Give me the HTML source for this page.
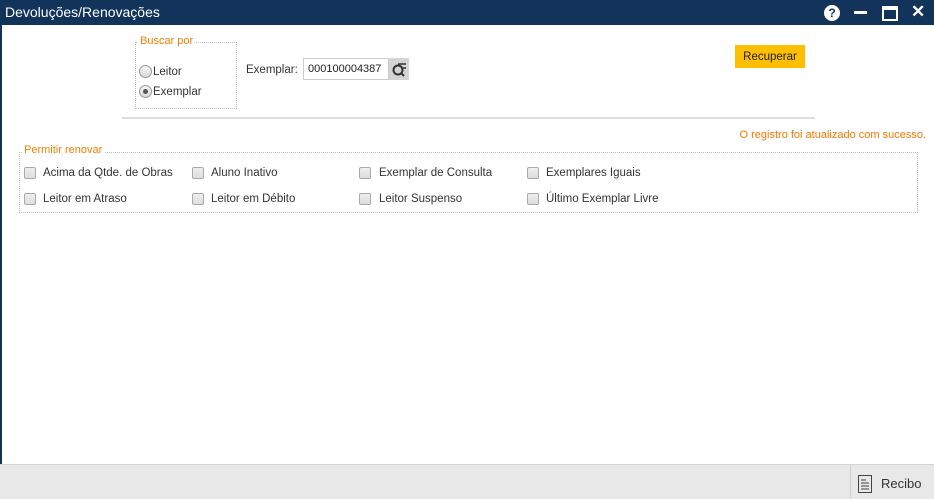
<!DOCTYPE html>
<html><head><meta charset="utf-8"><style>
*{margin:0;padding:0;box-sizing:border-box}
body{width:934px;height:499px;position:relative;overflow:hidden;background:#fff;font-family:"Liberation Sans",sans-serif;font-size:11.5px;color:#333}
.a{position:absolute;white-space:nowrap}
.title{left:0;top:0;width:934px;height:25px;background:#12345a;color:#fff;font-size:14px;padding:4px 0 0 5px}
.lb{left:0;top:25px;width:2px;height:440px;background:#12345a}
.cb{width:12px;height:12px;border:1px solid #aaa;border-radius:2px;background:linear-gradient(#eee,#ddd)}
.lbl{font-size:11.5px;color:#333}
.rd{width:13px;height:13px;border:1px solid #999;border-radius:50%;background:linear-gradient(#f4f4f4,#d8d8d8)}
</style></head><body>
<div class="a title">Devoluções/Renovações</div>
<div class="a" style="left:824px;top:5px;width:16px;height:16px;border-radius:50%;background:#fff;color:#12345a;font-weight:bold;font-size:12px;text-align:center;line-height:16px">?</div>
<div class="a" style="left:854px;top:11px;width:13px;height:3px;background:#fff"></div>
<div class="a" style="left:882px;top:6px;width:16px;height:15px;border:2px solid #fff;border-top-width:4px"></div>
<div class="a" style="left:911px;top:2px;color:#fff;font-size:17px;font-weight:bold">✕</div>
<div class="a lb"></div>

<div class="a" style="left:135px;top:42px;width:102px;height:67px;border:1px dotted #bbb"></div>
<div class="a" style="left:138px;top:35px;background:#fff;padding:0 2px;color:#f08000;font-size:11px">Buscar por</div>
<div class="a rd" style="left:139px;top:65px"></div>
<div class="a lbl" style="left:153px;top:66px">Leitor</div>
<div class="a rd" style="left:139px;top:85px"></div>
<div class="a" style="left:143px;top:89px;width:5px;height:5px;border-radius:50%;background:#555"></div>
<div class="a lbl" style="left:153px;top:86px">Exemplar</div>

<div class="a lbl" style="left:246px;top:64px">Exemplar:</div>
<div class="a" style="left:303px;top:58px;width:86px;height:22px;border:1px solid #ccc;font-size:11px;padding:4px 0 0 4px;color:#222">000100004387</div>
<div class="a" style="left:389px;top:58px;width:20px;height:22px;background:#d4d4d4"><svg width="20" height="22"><circle cx="9" cy="12" r="4.5" fill="none" stroke="#333" stroke-width="2"/><line x1="12" y1="15" x2="15" y2="18" stroke="#333" stroke-width="2"/><line x1="9" y1="6" x2="17" y2="6" stroke="#333" stroke-width="1.5"/><line x1="14" y1="10" x2="17" y2="10" stroke="#333" stroke-width="1.5"/></svg></div>

<div class="a" style="left:735px;top:45px;width:70px;height:23px;background:#fdbf00;color:#222;font-size:11.5px;text-align:center;line-height:24px">Recuperar</div>
<div class="a" style="left:122px;top:117px;width:693px;height:2px;background:#ddd"></div>
<div class="a" style="right:8px;top:129px;color:#f07800;font-size:11px">O registro foi atualizado com sucesso.</div>

<div class="a" style="left:19px;top:152px;width:899px;height:61px;border:1px dotted #bbb"></div>
<div class="a" style="left:22px;top:144px;background:#fff;padding:0 2px;color:#f08000;font-size:11px">Permitir renovar</div>

<div class="a cb" style="left:24px;top:167px"></div><div class="a lbl" style="left:43px;top:167px">Acima da Qtde. de Obras</div>
<div class="a cb" style="left:192px;top:167px"></div><div class="a lbl" style="left:211px;top:167px">Aluno Inativo</div>
<div class="a cb" style="left:359px;top:167px"></div><div class="a lbl" style="left:379px;top:167px">Exemplar de Consulta</div>
<div class="a cb" style="left:527px;top:167px"></div><div class="a lbl" style="left:546px;top:167px">Exemplares Iguais</div>
<div class="a cb" style="left:24px;top:193px"></div><div class="a lbl" style="left:43px;top:193px">Leitor em Atraso</div>
<div class="a cb" style="left:192px;top:193px"></div><div class="a lbl" style="left:211px;top:193px">Leitor em Débito</div>
<div class="a cb" style="left:359px;top:193px"></div><div class="a lbl" style="left:379px;top:193px">Leitor Suspenso</div>
<div class="a cb" style="left:527px;top:193px"></div><div class="a lbl" style="left:546px;top:193px">Último Exemplar Livre</div>

<div class="a" style="left:0;top:464px;width:934px;height:35px;background:#e8e8e8;border-top:1px solid #d4d4d4"></div>
<div class="a" style="left:850px;top:465px;width:1px;height:34px;background:#d0d0d0"></div>
<div class="a" style="left:858px;top:475px"><svg width="14" height="18"><rect x="0.5" y="0.5" width="13" height="17" fill="none" stroke="#444"/><g stroke="#444"><line x1="3" y1="5" x2="8" y2="5"/><line x1="3" y1="8" x2="11" y2="8"/><line x1="3" y1="11" x2="11" y2="11"/><line x1="3" y1="14" x2="11" y2="14"/></g></svg></div>
<div class="a" style="left:881px;top:476px;font-size:13px;color:#333">Recibo</div>
</body></html>
